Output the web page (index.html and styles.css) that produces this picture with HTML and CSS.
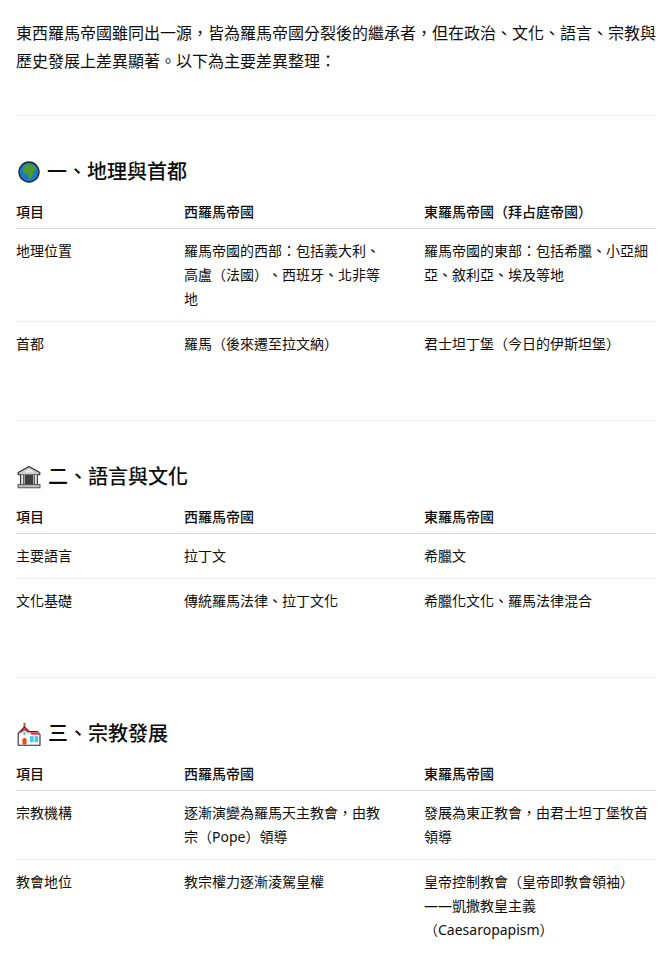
FILE: index.html
```html
<!DOCTYPE html>
<html lang="zh-Hant">
<head>
<meta charset="utf-8">
<title>東西羅馬帝國差異</title>
<link rel="stylesheet" href="styles.css">
</head>
<body>
<main class="doc">
  <p class="intro">東西羅馬帝國雖同出一源，皆為羅馬帝國分裂後的繼承者，但在政治、文化、語言、宗教與歷史發展上差異顯著。以下為主要差異整理：</p>
  <hr class="rule rule-first">

  <h3 class="title">
    <svg class="emoji emoji-globe" viewBox="0 0 22 22" aria-hidden="true">
      <circle cx="11" cy="11" r="10" fill="#1b78c9" stroke="#1c2a33" stroke-width="1.4"/>
      <path d="M7 4.2 L12 3 L15.5 4.2 L17.5 6.5 L18.5 9 L15.5 10 L16 13 L13.5 16.5 L12 18.5 L10.5 17 L10 13.5 L7 13 L4.5 10.5 L5 7.5 Z" fill="#4a9a2c"/>
    </svg>
    <span>一、地理與首都</span>
  </h3>
  <table class="grid">
    <thead><tr><th class="c1">項目</th><th class="c2">西羅馬帝國</th><th class="c3">東羅馬帝國（拜占庭帝國）</th></tr></thead>
    <tbody>
      <tr><td class="c1">地理位置</td><td class="c2">羅馬帝國的西部：包括義大利、高盧（法國）、西班牙、北非等地</td><td class="c3">羅馬帝國的東部：包括希臘、小亞細亞、敘利亞、埃及等地</td></tr>
      <tr><td class="c1">首都</td><td class="c2">羅馬（後來遷至拉文納）</td><td class="c3">君士坦丁堡（今日的伊斯坦堡）</td></tr>
    </tbody>
  </table>
  <hr class="rule">

  <h3 class="title">
    <svg class="emoji emoji-wide" viewBox="0 0 24 24" aria-hidden="true">
      <path d="M12 1.5 L22.8 7.6 V9.6 H1.2 V7.6 Z" fill="#c9c9c9" stroke="#2e2e2e" stroke-width="1.2" stroke-linejoin="round"/>
      <path d="M12 4 L18 7.6 H6 Z" fill="#ececec"/>
      <rect x="3" y="9.6" width="18" height="10" fill="#e4e4e4"/>
      <rect x="8" y="10" width="8" height="9.6" fill="#3f3f3f"/>
      <path d="M3.6 10v9.6M6.8 10v9.6M17.2 10v9.6M20.4 10v9.6" stroke="#333" stroke-width="1.1"/>
      <rect x="1" y="19.6" width="22" height="3.2" fill="#bdbdbd" stroke="#4a4a4a" stroke-width=".9"/>
    </svg>
    <span>二、語言與文化</span>
  </h3>
  <table class="grid">
    <thead><tr><th class="c1">項目</th><th class="c2">西羅馬帝國</th><th class="c3">東羅馬帝國</th></tr></thead>
    <tbody>
      <tr><td class="c1">主要語言</td><td class="c2">拉丁文</td><td class="c3">希臘文</td></tr>
      <tr><td class="c1">文化基礎</td><td class="c2">傳統羅馬法律、拉丁文化</td><td class="c3">希臘化文化、羅馬法律混合</td></tr>
    </tbody>
  </table>
  <hr class="rule">

  <h3 class="title">
    <svg class="emoji emoji-wide" viewBox="0 0 24 24" aria-hidden="true">
      <path d="M7.5 .8v5" stroke="#a8691c" stroke-width="2"/>
      <path d="M7.5 5 L1.2 11.5 V23.2 H23 V12.5 L20.5 9.5 H12 Z" fill="#fff" stroke="#2b2b2b" stroke-width="1.1" stroke-linejoin="round"/>
      <path d="M12.4 10.2 H20.2 L22.4 12.8 H14.6 Z" fill="#e8323c"/>
      <path d="M7.5 5.8 L3 10.4 L4 11 L7.5 8.4 L11 11 L12 10.4 Z" fill="#e8323c"/>
      <rect x="5.4" y="16" width="4.2" height="6.8" rx="1.8" fill="#ee4a22"/>
      <rect x="13" y="14.2" width="3.6" height="6" fill="#43c6ef"/>
      <rect x="17.6" y="14.2" width="3.6" height="6" fill="#43c6ef"/>
      <circle cx="7.5" cy="11.6" r="1.4" fill="#43c6ef"/>
    </svg>
    <span>三、宗教發展</span>
  </h3>
  <table class="grid">
    <thead><tr><th class="c1">項目</th><th class="c2">西羅馬帝國</th><th class="c3">東羅馬帝國</th></tr></thead>
    <tbody>
      <tr><td class="c1">宗教機構</td><td class="c2">逐漸演變為羅馬天主教會，由教宗（Pope）領導</td><td class="c3">發展為東正教會，由君士坦丁堡牧首領導</td></tr>
      <tr><td class="c1">教會地位</td><td class="c2">教宗權力逐漸淩駕皇權</td><td class="c3">皇帝控制教會（皇帝即教會領袖）——凱撒教皇主義（Caesaropapism）</td></tr>
    </tbody>
  </table>
</main>
</body>
</html>
```
FILE: styles.css
```css
* { box-sizing: border-box; }
html, body { margin: 0; padding: 0; background: #fff; }
body {
  color: #0d0d0d;
  font-family: "Noto Sans", "Noto Sans CJK TC", sans-serif;
  font-size: 16px;
  line-height: 28px;
  text-spacing-trim: space-all;
}
.doc { padding: 19px 16px 40px; width: 672px; }
.intro { margin: 0; }
.rule { border: 0; border-top: 1px solid #f3f3f3; margin: 54px 0 0; height: 0; }
.rule-first { margin-top: 40px; }
.title {
  display: flex;
  align-items: center;
  gap: 7px;
  margin: 41px 0 13px;
  font-size: 20px;
  line-height: 30px;
  font-weight: 500;
  letter-spacing: 0;
}
.emoji { display: block; flex: none; }
.emoji-globe { width: 22px; height: 22px; margin-left: 2px; }
.emoji-wide { width: 24px; height: 24px; margin-left: 1px; }
.grid {
  width: 640px;
  table-layout: fixed;
  border-collapse: collapse;
  font-size: 14px;
  line-height: 24px;
}
.grid th {
  text-align: left;
  font-weight: 500;
  padding: 0 0 4px;
  border-bottom: 1px solid #d9d9d9;
}
.grid td {
  padding: 10px 0;
  vertical-align: top;
  border-bottom: 1px solid #ececec;
}
.grid tbody tr:last-child td { border-bottom: 0; }
.c1 { width: 168px; }
.c2 { width: 240px; }
.grid .c2 { padding-right: 32px; }
.c3 { width: 232px; }
```
